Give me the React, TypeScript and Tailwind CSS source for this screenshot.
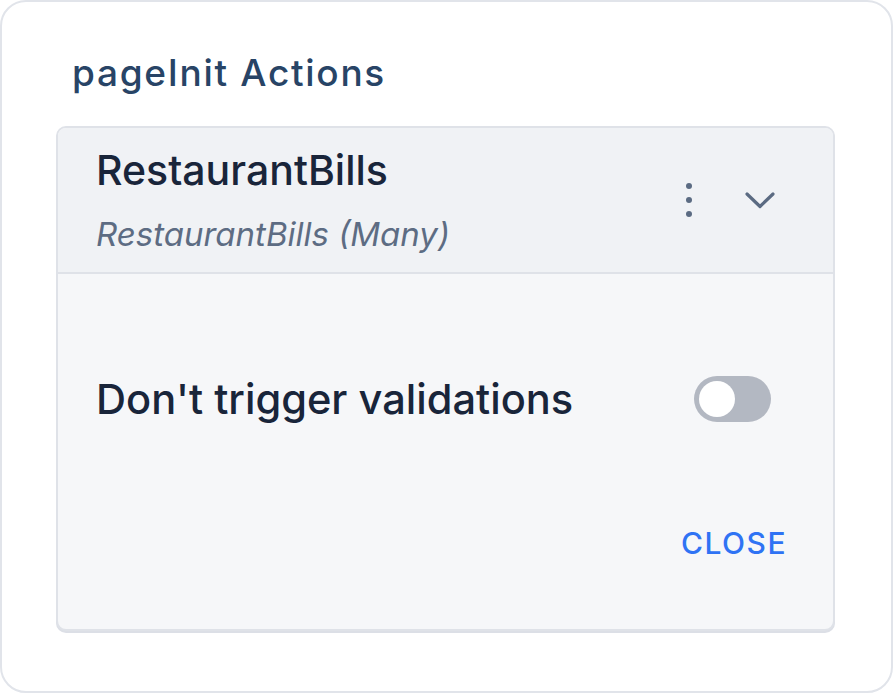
export default function App() {
  return (
    <div className="w-[894px] h-[694px] bg-white" style={{ fontFamily: "Inter, 'Noto Sans', sans-serif" }}>
      <div className="w-[893px] h-[693px] border-2 border-[#e1e4ea] rounded-[26px] bg-white px-[54px] pt-[44px] flex flex-col">
        <h1 className="pl-[16px] text-[37px] leading-[54px] text-[#284466] font-medium tracking-[1.7px]">pageInit Actions</h1>
        <div className="mt-[26px] w-[779px] h-[505px] border-2 border-[#dfe2e8] rounded-[10px] overflow-hidden flex flex-col bg-[#f6f7f9] shadow-[0_2px_0_#dcdfe6]">
          <div className="h-[146px] shrink-0 bg-[#f0f2f5] border-b-2 border-[#dfe2e8] flex items-center pl-[38px] pr-[57px]">
            <div className="flex-1 flex flex-col">
              <span className="text-[41px] leading-[52px] text-[#19253a] font-medium">RestaurantBills</span>
              <span className="mt-[16px] text-[33px] leading-[44px] italic text-[#5d6c83]">RestaurantBills (Many)</span>
            </div>
            <svg width="8" height="34" viewBox="0 0 8 34">
              <circle cx="4" cy="3" r="3" fill="#5b6b82" />
              <circle cx="4" cy="17" r="3" fill="#5b6b82" />
              <circle cx="4" cy="31" r="3" fill="#5b6b82" />
            </svg>
            <svg width="32" height="20" viewBox="0 0 32 20" className="ml-[51px]">
              <path d="M3 4 L16 16.5 L29 4" fill="none" stroke="#5b6b82" strokeWidth="3.2" strokeLinecap="round" strokeLinejoin="round" />
            </svg>
          </div>
          <div className="flex-1 flex flex-col pl-[38px] pr-[46px]">
            <div className="mt-[100px] flex items-center justify-between pr-[16px]">
              <span className="text-[41.6px] leading-[50px] text-[#19253a] font-medium">Don't trigger validations</span>
              <div className="w-[77px] h-[46px] rounded-full bg-[#b3b8c2] flex items-center pl-[5px]">
                <div className="w-[36px] h-[36px] rounded-full bg-white" />
              </div>
            </div>
            <div className="mt-[99px] flex justify-end">
              <span className="text-[30px] leading-[40px] text-[#2f73f4] font-medium tracking-[1.5px]">CLOSE</span>
            </div>
          </div>
        </div>
      </div>
    </div>
  );
}
